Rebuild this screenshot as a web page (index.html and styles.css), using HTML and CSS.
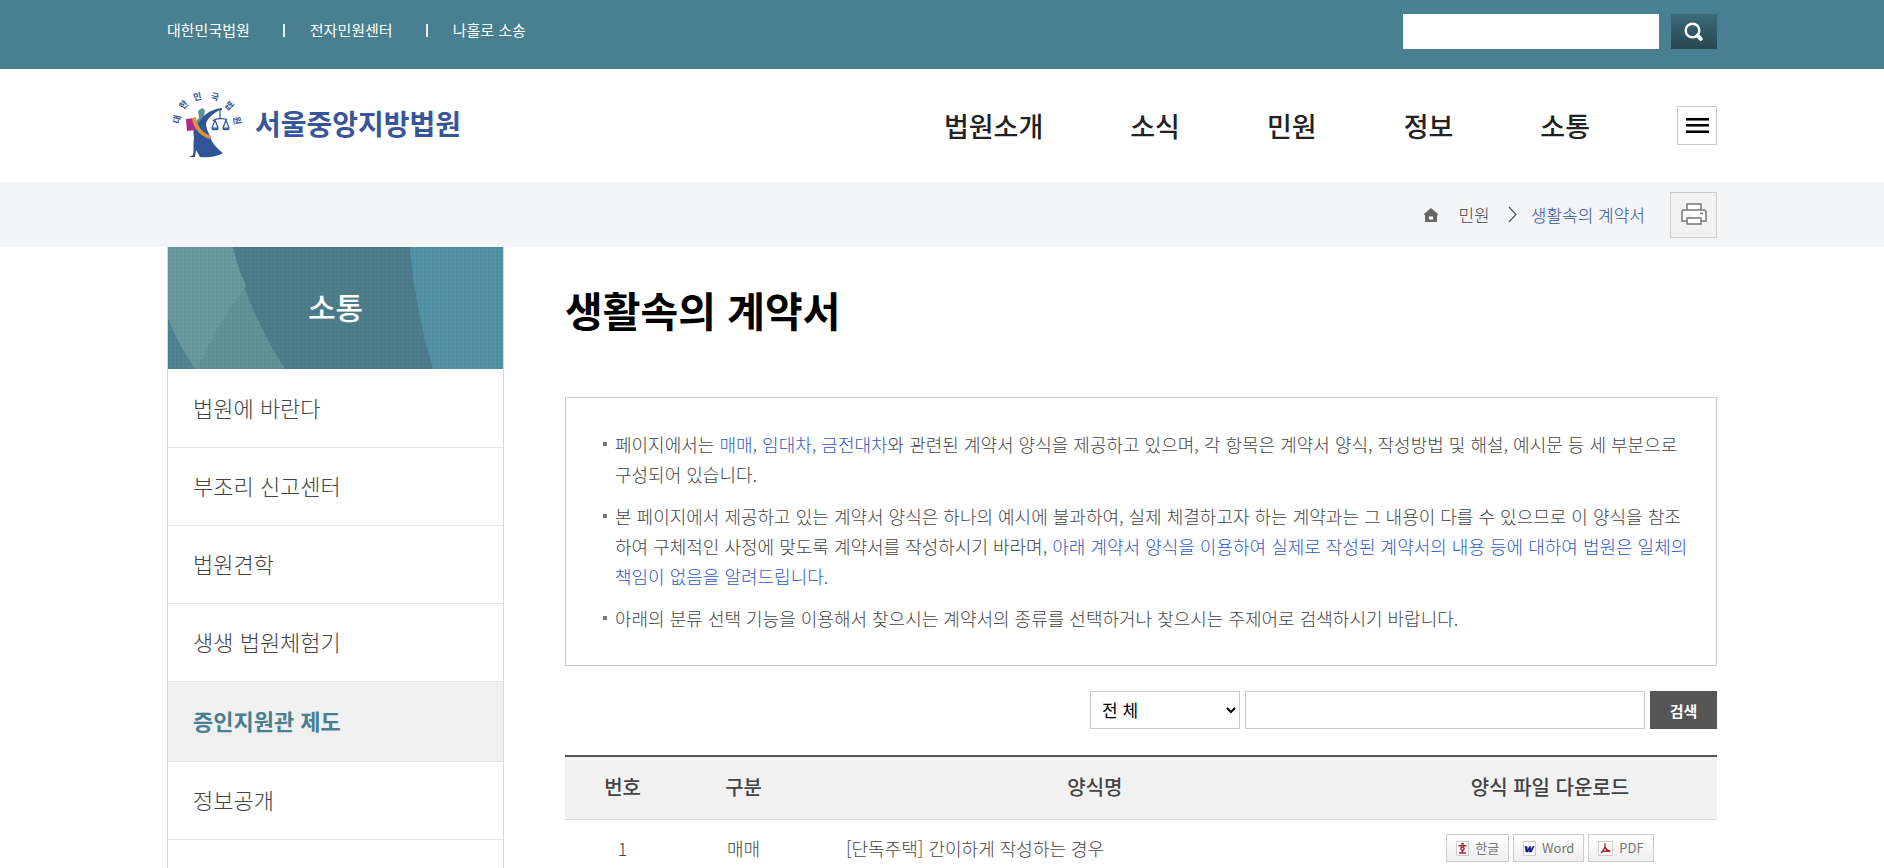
FILE: index.html
```html
<!DOCTYPE html>
<html lang="ko">
<head>
<meta charset="utf-8">
<meta name="viewport" content="width=device-width, initial-scale=1">
<title>생활속의 계약서 - 서울중앙지방법원</title>
<link rel="stylesheet" href="styles.css">
</head>
<body>
<div class="topbar">
  <div class="wrap topbar-inner">
    <ul class="top-links">
      <li><a href="#">대한민국법원</a></li>
      <li><a href="#">전자민원센터</a></li>
      <li><a href="#">나홀로 소송</a></li>
    </ul>
    <form class="top-search">
      <input type="text" class="top-input" aria-label="통합검색">
      <button type="button" class="top-button" aria-label="검색">
        <svg width="20" height="20" viewBox="0 0 20 20" fill="none" stroke="#fff"><circle cx="8.500" cy="8.500" r="6.800" stroke-width="2.400"/><path d="M13.500 13.500l3.300 3.300" stroke-width="4" stroke-linecap="round"/></svg>
      </button>
    </form>
  </div>
</div>

<header class="wrap header">
  <a href="#" class="logo">
    <svg class="emblem" width="72" height="70" viewBox="0 0 72 70" aria-hidden="true">
      <g class="emblem-text" text-anchor="middle">
        <text transform="translate(9 29) rotate(-78)">대</text>
        <text transform="translate(15 16) rotate(-48)">한</text>
        <text transform="translate(27 9) rotate(-12)">민</text>
        <text transform="translate(43 9) rotate(14)">국</text>
        <text transform="translate(56 17) rotate(45)">법</text>
        <text transform="translate(63 30) rotate(80)">원</text>
      </g>
      <path d="M27 20l4-3 3 2-1 6 3 3-8 12-5-8 5-5z" fill="#5f9393"/>
      <path d="M51 17c-10 1-18 6-22 13-7 5-7 10-6 17-1 7 0 13-1 17l-4 2h6l1-7 4 7c8 1 16 0 23-4-8-6-12-12-13-17-2-4-4-8-4-13 3-6 9-12 16-13z" fill="#2f5597"/>
      <path d="M15 28l8-1 2 12-9 1z" fill="#b02a8b"/>
      <path d="M21 27l4-1c1 9 6 16 15 19l-1 3c-10-3-17-11-18-21z" fill="#dc9440"/>
      <g fill="none" stroke="#2f5597" stroke-width="1.200"><path d="M49 18v9M42 30c2-3 12-3 14-1M44 29l-3 8h6zM55 29l-3 8h6z"/><path d="M41 37.500a3.500 2 0 0 0 6 0M52 37.500a3.500 2 0 0 0 6 0" stroke-width="1.800"/></g>
    </svg>
    <span class="logo-name">서울중앙지방법원</span>
  </a>
  <nav class="gnb">
    <a href="#">법원소개</a>
    <a href="#">소식</a>
    <a href="#">민원</a>
    <a href="#">정보</a>
    <a href="#">소통</a>
    <button type="button" class="menu-button" aria-label="전체메뉴">
      <svg width="23" height="15" viewBox="0 0 23 15"><path d="M0 0h23v2H0zM0 6h23v2H0zM0 13h23v2H0z"/><path d="M0 2h23v1H0zM0 8h23v1H0zM0 12h23v1H0z" opacity=".55"/></svg>
    </button>
  </nav>
</header>

<div class="location">
  <div class="wrap location-inner">
    <svg class="home" width="14" height="14" viewBox="0 0 14 14"><path d="M7 0l7 6v1h-1v7H1V7H0V6z" fill="#666"/><path d="M5 8.500h4v3H5z" fill="#fff"/></svg>
    <a href="#" class="crumb">민원</a>
    <svg class="chevron" width="9" height="17" viewBox="0 0 9 17" fill="none" stroke="#555" stroke-width="1.200"><path d="M1 1l7 7.500L1 16"/></svg>
    <a href="#" class="crumb crumb-current">생활속의 계약서</a>
    <button type="button" class="print-button" aria-label="인쇄">
      <svg width="26" height="23" viewBox="0 0 26 23" fill="#fff" stroke="#777" stroke-width="1.500"><path d="M6 7V1h14v6"/><path d="M3 7h20q2 0 2 2v9h-5M6 18H1V9q0-2 2-2"/><path d="M6 15h14v6H6z"/><path d="M19 10.500h3" fill="none"/></svg>
    </button>
  </div>
</div>

<div class="wrap page">
  <aside class="side">
    <div class="side-head">
      <svg class="side-art" viewBox="0 0 335 122" preserveAspectRatio="none" aria-hidden="true">
        <defs><pattern id="dots" width="4" height="4" patternUnits="userSpaceOnUse"><path d="M0 0h2v2H0z" fill="#245a68" opacity=".15"/></pattern></defs>
        <path d="M0 0h335v122H0z" fill="#4d7c8b"/>
        <path d="M0 0h65q14 63 52 122H0z" fill="#649397"/>
        <path d="M0 0h65q4 20 13 39Q54 68 29 122H27Q10 97 0 72z" fill="#6a999e"/>
        <path d="M0 72q10 25 27 50H0z" fill="#518393"/>
        <path d="M242 0h93v122h-70Q247 63 242 0z" fill="#5493a5"/>
        <path d="M0 0h335v122H0z" fill="url(#dots)"/>
      </svg>
      <h2 class="side-title">소통</h2>
    </div>
    <ul class="side-menu">
      <li><a href="#">법원에 바란다</a></li>
      <li><a href="#">부조리 신고센터</a></li>
      <li><a href="#">법원견학</a></li>
      <li><a href="#">생생 법원체험기</a></li>
      <li class="active"><a href="#">증인지원관 제도</a></li>
      <li><a href="#">정보공개</a></li>
    </ul>
  </aside>

  <main class="content">
    <h1 class="title">생활속의 계약서</h1>
    <ul class="notice">
      <li>페이지에서는 <em>매매, 임대차, 금전대차</em>와 관련된 계약서 양식을 제공하고 있으며, 각 항목은 계약서 양식, 작성방법 및 해설, 예시문 등 세 부분으로 구성되어 있습니다.</li>
      <li>본 페이지에서 제공하고 있는 계약서 양식은 하나의 예시에 불과하여, 실제 체결하고자 하는 계약과는 그 내용이 다를 수 있으므로 이 양식을 참조하여 구체적인 사정에 맞도록 계약서를 작성하시기 바라며, <em>아래 계약서 양식을 이용하여 실제로 작성된 계약서의 내용 등에 대하여 법원은 일체의 책임이 없음을 알려드립니다.</em></li>
      <li>아래의 분류 선택 기능을 이용해서 찾으시는 계약서의 종류를 선택하거나 찾으시는 주제어로 검색하시기 바랍니다.</li>
    </ul>
    <form class="search">
      <select class="field search-kind" aria-label="분류"><option>전 체</option></select>
      <input type="text" class="field search-word" aria-label="검색어">
      <button type="button" class="search-button">검색</button>
    </form>
    <table class="forms">
      <thead>
        <tr><th class="col-no">번호</th><th class="col-kind">구분</th><th class="col-name">양식명</th><th class="col-file">양식 파일 다운로드</th></tr>
      </thead>
      <tbody>
        <tr>
          <td>1</td><td>매매</td><td class="name">[단독주택] 간이하게 작성하는 경우</td>
          <td>
            <div class="files">
              <a href="#" class="file"><svg width="13" height="15" viewBox="0 0 13 15"><path d="M.5.500h12v14H.5z" fill="#fff" stroke="#ccc"/><path d="M5 2.800h3M2.500 4.800h8M6.500 9v2.500M3 12h7" stroke="#a8202c" stroke-width="1.500" fill="none"/><circle cx="6.500" cy="7.700" r="1.600" stroke="#a8202c" stroke-width="1.500" fill="none"/></svg>한글</a>
              <a href="#" class="file"><svg width="13" height="15" viewBox="0 0 13 15"><path d="M.5.500h12v14H.5z" fill="#fff" stroke="#ccc"/><path d="M2 5.500h2l.5 4 2-4h1l.5 4 1.500-4H11L8.500 11h-2L6 8.500 5 11H3z" fill="#15158c" stroke="#15158c" stroke-width=".6"/></svg>Word</a>
              <a href="#" class="file"><svg width="15" height="15" viewBox="0 0 15 15"><path d="M.5.500h14v14H.5z" fill="#fff" stroke="#ccc"/><path d="M6.500 2.500c1.500 2 0 6-3.500 9.500M7 6c1 2.500 3 4 5.500 4.500M3 11.500c2-1.500 5.500-2 9.500-1" stroke="#a8202c" stroke-width="1.500" fill="none"/></svg>PDF</a>
            </div>
          </td>
        </tr>
      </tbody>
    </table>
  </main>
</div>
</body>
</html>
```
FILE: styles.css
```css
* { box-sizing: border-box; }
body {
  margin: 0;
  min-height: 100vh;
  display: flex;
  flex-direction: column;
  background: #fff;
  color: #444;
  font-family: "Noto Sans CJK KR", sans-serif;
  font-size: 18px;
  font-weight: 300;
  line-height: 30px;
}
a { color: inherit; text-decoration: none; }
ul { list-style: none; margin: 0; padding: 0; }
h1, h2 { margin: 0; }
em { font-style: normal; color: #3358c4; }
button { padding: 0; border: 0; border-radius: 0; font-family: inherit; cursor: pointer; display: grid; place-items: center; }
input, select { font-family: inherit; border-radius: 0; }
svg { display: block; flex: none; }
.wrap { width: 100%; max-width: 1550px; margin: 0 auto; }

.topbar { background: #487f91; color: #fff; }
.topbar-inner { display: flex; justify-content: space-between; align-items: flex-start; padding: 14px 0 20px; }
.top-links { display: flex; font-size: 15px; line-height: 32px; font-weight: 400; }
.top-links li { display: flex; align-items: center; }
.top-links li + li::before { content: ""; width: 2px; height: 13px; margin: 0 25px 0 33px; background: #e4eef1; }
.top-search { display: flex; gap: 12px; }
.top-input { width: 256px; height: 35px; border: 0; background: #fff; padding: 0 8px; }
.top-button { width: 46px; height: 35px; background: linear-gradient(#3b6b79, #27464f); }

.header { display: flex; justify-content: space-between; align-items: center; height: 113px; }
.logo { display: flex; align-items: center; gap: 12px; padding-left: 4px; }
.emblem { overflow: visible; }
.emblem-text { font-size: 9px; font-weight: 700; fill: #37569a; }
.logo-name { padding-bottom: 6px; color: #37569a; font-size: 28px; font-weight: 700; }
.gnb { display: flex; align-items: center; gap: 87px; font-size: 27px; font-weight: 500; color: #222; }
.menu-button { width: 40px; height: 39px; border: 1px solid #ccc; background: #fff; }

.location { background: #f4f5f7; }
.location-inner { display: flex; justify-content: flex-end; align-items: center; height: 65px; font-size: 17px; }
.crumb { margin-left: 20px; }
.chevron { margin-left: 18px; }
.crumb-current { margin-left: 14px; color: #2f4f98; }
.print-button { width: 47px; height: 46px; margin-left: 25px; border: 1px solid #ccc; background: #f2f2f2; }

.page { display: flex; flex: 1; gap: 61px; }
.side { width: 337px; flex: none; border: solid #d9d9d9; border-width: 0 1px; }
.side-head { position: relative; display: grid; place-items: center; height: 122px; padding-bottom: 4px; }
.side-art { position: absolute; inset: 0; width: 100%; height: 100%; }
.side-title { position: relative; color: #fff; font-size: 30px; font-weight: 500; }
.side-menu { padding-top: 1px; font-size: 22px; line-height: 75px; }
.side-menu a { display: block; padding: 0 25px 2px; border-bottom: 1px solid #e6e6e6; }
.side-menu .active a { background: #f0f0f0; color: #487f91; font-weight: 700; line-height: 77px; }

.content { flex: 1; min-width: 0; }
.title { padding: 32px 0 58px; color: #000; font-size: 41px; line-height: 60px; font-weight: 700; }
.notice { display: grid; gap: 12px; padding: 31px 24px 32px 49px; border: 1px solid #ccc; }
.notice li { position: relative; }
.notice li::before { content: ""; position: absolute; left: -12px; top: 13px; width: 4px; height: 4px; background: #777; }
.search { display: flex; justify-content: flex-end; gap: 5px; margin: 25px 0 26px; }
.field { height: 38px; border: 1px solid #ccc; background: #fff; font-size: 17px; }
.search-kind { width: 150px; padding: 0 7px 2px; color: #000; }
.search-word { width: 400px; padding: 0 8px; }
.search-button { width: 67px; background: #555; color: #fff; font-size: 15px; font-weight: 700; }
.forms { width: 100%; table-layout: fixed; border-collapse: collapse; border-top: 2px solid #555; text-align: center; }
.forms th { padding: 15px 0 17px; background: #f2f2f2; border-bottom: 1px solid #ddd; font-size: 20px; font-weight: 500; }
.forms td { padding: 13px 0; }
.col-no { width: 10%; }
.col-kind { width: 11%; }
.col-name { width: 50%; }
.col-file { width: 29%; }
.forms .name { padding-left: 39px; text-align: left; }
.files { display: flex; justify-content: center; gap: 4px; }
.file { display: flex; align-items: center; gap: 6px; height: 28px; padding: 0 9px; border: 1px solid #ccc; background: linear-gradient(#fff, #eee); color: #777; font-size: 13px; font-weight: 400; }
```
